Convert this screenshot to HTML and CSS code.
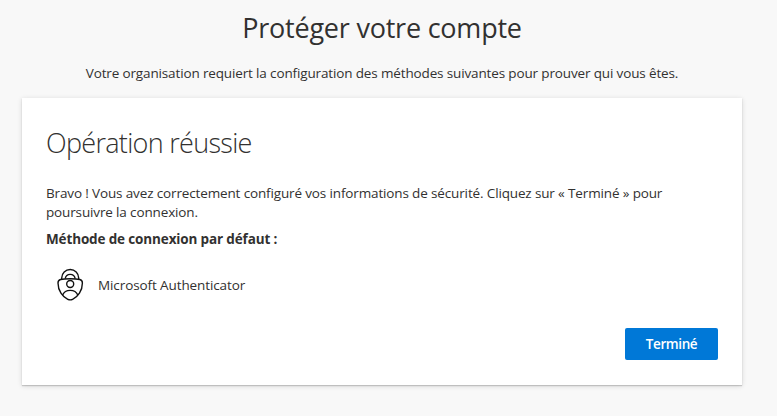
FILE: index.html
```
<!DOCTYPE html>
<html lang="fr">
<head>
    <meta charset="UTF-8">
    <meta name="viewport" content="width=device-width, initial-scale=1.0">
    <title>Protéger votre compte</title>
    <link rel="stylesheet" href="styles.css">
</head>
<body>
    <main class="page">
        <h1 class="titre">Protéger votre compte</h1>
        <p class="intro">Votre organisation requiert la configuration des méthodes suivantes pour prouver qui vous êtes.</p>
        <section class="carte">
            <h2 class="sous-titre">Opération réussie</h2>
            <p class="message">Bravo ! Vous avez correctement configuré vos informations de sécurité. Cliquez sur « Terminé » pour<br>poursuivre la connexion.</p>
            <p class="defaut">Méthode de connexion par défaut :</p>
            <div class="methode">
                <svg class="icone" viewBox="0 0 28 34" fill="none" stroke="#111" stroke-width="1.4" aria-hidden="true">
                    <path d="M5.700 11.200V10a8.500 8.500 0 0 1 17 0v1.200"/>
                    <path d="M9.200 10.600c.5-2.700 2.500-4.200 5-4.200s4.500 1.500 5 4.200"/>
                    <path d="M14.200 10.700c-4.200 0-7.200.2-9.600.8C2.700 12 2 13 2 14.900c0 7.800 4.600 14 9.800 16.400 1.700.8 3.100.8 4.800 0 5.200-2.400 9.800-8.600 9.800-16.400 0-1.900-.7-2.900-2.600-3.400-2.400-.6-5.400-.8-9.600-.8z"/>
                    <circle cx="14.200" cy="16" r="3.500"/>
                    <path d="M6.500 27.300c1.300-3.100 4.200-4.900 7.700-4.900s6.400 1.800 7.700 4.900"/>
                </svg>
                <span class="nom">Microsoft Authenticator</span>
            </div>
            <div class="actions">
                <button class="bouton" type="button">Terminé</button>
            </div>
        </section>
    </main>
</body>
</html>
```
FILE: styles.css
```
* {
    box-sizing: border-box;
}

body {
    min-height: 100vh;
    margin: 0;
    background-color: #f8f8f8;
    color: #323130;
    font-family: "Segoe UI", "Open Sans", "Noto Sans", sans-serif;
    font-size: 13.5px;
    line-height: 19px;
    letter-spacing: -0.14px;
}

h1, h2, p {
    margin: 0;
}

.page {
    width: 720px;
    margin-left: 22px;
    padding-top: 8px;
}

.titre {
    font-size: 27px;
    font-weight: 400;
    line-height: 40px;
    text-align: center;
    letter-spacing: -0.22px;
}

.intro {
    margin-top: 16px;
    text-align: center;
}

.carte {
    height: 287px;
    margin-top: 15px;
    padding: 24px;
    background-color: #fff;
    box-shadow: 0 1px 1px rgba(0, 0, 0, 0.16), 0 1px 5px rgba(0, 0, 0, 0.14);
}

.sous-titre {
    padding-top: 1px;
    font-size: 27px;
    font-weight: 300;
    line-height: 40px;
    letter-spacing: -0.7px;
}

.message {
    margin-top: 21px;
    white-space: nowrap;
}

.defaut {
    margin-top: 8px;
    font-weight: 700;
}

.methode {
    display: flex;
    align-items: center;
    gap: 14px;
    height: 34px;
    margin-top: 19px;
    padding-left: 10px;
}

.icone {
    width: 28px;
    height: 34px;
}

.nom {
    letter-spacing: -0.1px;
}

.actions {
    display: flex;
    justify-content: flex-end;
    margin-top: 26px;
}

.bouton {
    width: 93px;
    height: 32px;
    padding: 0;
    border: none;
    border-radius: 2px;
    background-color: #0078d7;
    color: #fff;
    font-family: inherit;
    font-size: 13.5px;
    font-weight: 600;
    letter-spacing: -0.4px;
    cursor: pointer;
}
```
